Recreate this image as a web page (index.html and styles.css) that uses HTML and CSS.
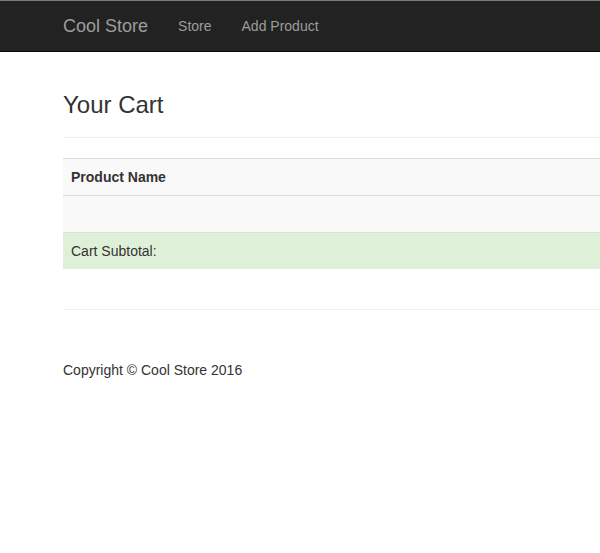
FILE: index.html
```html
<!DOCTYPE html>
<html>
<head>
<meta charset="utf-8">
<link rel="stylesheet" href="styles.css">
</head>
<body>
<nav class="navbar">
  <div class="container nav-inner">
    <a class="brand" href="#">Cool Store</a>
    <ul class="nav">
      <li><a href="#">Store</a></li>
      <li><a href="#">Add Product</a></li>
    </ul>
  </div>
</nav>
<div class="container">
  <div class="page-header"><h3>Your Cart</h3></div>
  <table class="table">
    <thead>
      <tr><th>Product Name</th></tr>
    </thead>
    <tbody>
      <tr class="empty"><td></td></tr>
      <tr class="success"><td>Cart Subtotal:</td></tr>
    </tbody>
  </table>
  <hr class="rule">
  <footer class="footer">
    <p>Copyright &copy; Cool Store 2016</p>
  </footer>
</div>
</body>
</html>
```
FILE: styles.css
```css
html, body {
  margin: 0;
  padding: 0;
  overflow: hidden;
}
body {
  font-family: "Liberation Sans", Arial, sans-serif;
  font-size: 14px;
  line-height: 1.42857;
  color: #333;
  background: #fff;
  width: 1266px;
}
.container {
  width: 1170px;
  margin-left: 48px;
  padding: 0 15px;
  box-sizing: border-box;
}
.navbar {
  background: #222;
  border-top: 1px solid #7a7a7a;
  border-bottom: 1px solid #080808;
  height: 50px;
}
.nav-inner {
  display: flex;
  align-items: stretch;
  height: 50px;
}
.brand {
  font-size: 18px;
  line-height: 20px;
  padding: 15px 15px 15px 0;
  color: #9d9d9d;
  text-decoration: none;
}
.nav {
  display: flex;
  list-style: none;
  margin: 0;
  padding: 0;
}
.nav a {
  display: block;
  padding: 15px;
  line-height: 20px;
  color: #9d9d9d;
  text-decoration: none;
}
.page-header {
  margin: 40px 0 20px;
  padding-bottom: 19px;
  border-bottom: 1px solid #eee;
}
.page-header h3 {
  margin: 0;
  font-size: 24px;
  font-weight: 500;
  line-height: 1.1;
}
.table {
  width: 100%;
  border-collapse: collapse;
  margin-bottom: 40px;
}
.table th, .table td {
  padding: 8px;
  line-height: 20px;
  text-align: left;
  border-top: 1px solid #ddd;
  height: 20px;
}
.table thead th {
  border-bottom: 1px solid #ddd;
  background: #f9f9f9;
  font-weight: bold;
}
.table tr.empty td {
  background: #f9f9f9;
  border-top: 0;
}
.table tr.success td {
  background: #dff0d8;
}
.rule {
  margin: 20px 0;
  border: 0;
  border-top: 1px solid #eee;
}
.footer {
  padding-top: 31px;
}
.footer p {
  margin: 0 0 10px;
}
```
